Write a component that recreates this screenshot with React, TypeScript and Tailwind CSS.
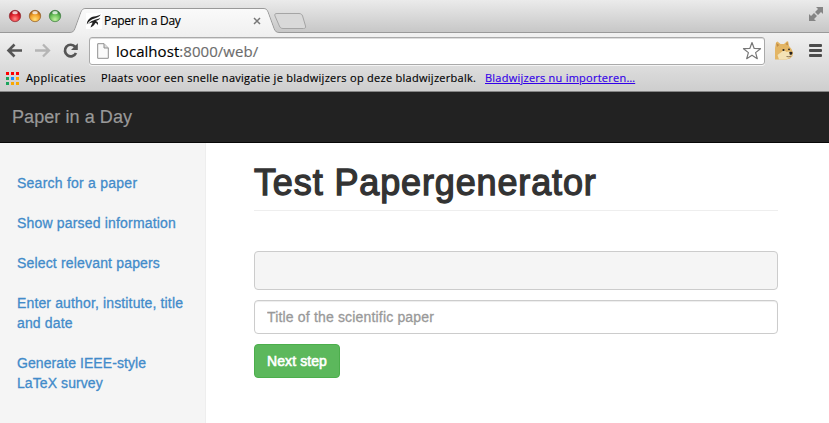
import React from "react";

const steps = [
  { lines: ["Search for a paper"], tracking: "tracking-[0.24px]" },
  { lines: ["Show parsed information"], tracking: "tracking-[0.18px]" },
  { lines: ["Select relevant papers"], tracking: "tracking-[0.17px]" },
  { lines: ["Enter author, institute, title", "and date"], tracking: "tracking-[0.14px]" },
  { lines: ["Generate IEEE-style", "LaTeX survey"], tracking: "tracking-[0.08px]" },
];

function TrafficLights() {
  return (
    <svg width="54" height="16" viewBox="0 0 54 16" className="absolute left-[8px] top-[8px]">
      <defs>
        <radialGradient id="red" cx=".5" cy=".75" r=".65">
          <stop offset="0" stopColor="#ff8a86" /><stop offset=".6" stopColor="#e3242e" /><stop offset="1" stopColor="#a3101c" />
        </radialGradient>
        <radialGradient id="amber" cx=".5" cy=".8" r=".7">
          <stop offset="0" stopColor="#ffe07a" /><stop offset=".6" stopColor="#f4a32a" /><stop offset="1" stopColor="#a8631a" />
        </radialGradient>
        <radialGradient id="green" cx=".5" cy=".8" r=".7">
          <stop offset="0" stopColor="#c0f0a0" /><stop offset=".6" stopColor="#6cc25a" /><stop offset="1" stopColor="#37813a" />
        </radialGradient>
      </defs>
      <circle cx="7" cy="8" r="5.7" fill="url(#red)" stroke="#8e2a30" strokeWidth=".7" />
      <circle cx="27" cy="8" r="5.7" fill="url(#amber)" stroke="#8f5a22" strokeWidth=".7" />
      <circle cx="47" cy="8" r="5.7" fill="url(#green)" stroke="#3c7a3e" strokeWidth=".7" />
      <ellipse cx="7" cy="4.7" rx="2.8" ry="1.6" fill="#fff" opacity=".75" />
      <ellipse cx="27" cy="4.7" rx="2.8" ry="1.6" fill="#fff" opacity=".75" />
      <ellipse cx="47" cy="4.7" rx="2.8" ry="1.6" fill="#fff" opacity=".75" />
    </svg>
  );
}

function TabStrip() {
  return (
    <div className="relative h-[33px] w-full bg-gradient-to-b from-[#ebebeb] to-[#c6c6c6]">
      <svg width="829" height="33" viewBox="0 0 829 33" className="absolute inset-0">
        <defs>
          <linearGradient id="tab" x1="0" x2="0" y1="0" y2="1">
            <stop offset="0" stopColor="#fafafa" /><stop offset="1" stopColor="#f1f1f1" />
          </linearGradient>
        </defs>
        <path d="M0 32.500H70C73 32.500 74 31 75 28.500L81 12C82.200 9.500 83 8.500 86 8.500H263C266 8.500 267 9.500 268 12L274 28.500C275 31 276 32.500 279 32.500H829" fill="none" stroke="#999" />
        <path d="M70 33C73 33 74.500 31 75.500 28.500L81.500 12C82.500 9.800 83.500 9 86 9H263C265.500 9 266.500 9.800 267.500 12L273.500 28.500C274.500 31 276 33 279 33Z" fill="url(#tab)" />
        <path d="M277 13.500H299C301 13.500 302 14.500 302.600 16L305.500 26C306 27.800 305 28.500 303.500 28.500H283C281 28.500 280 27.500 279.400 26L275 16C274.300 14.300 275 13.500 277 13.500Z" fill="#d9d9d9" stroke="#a5a5a5" />
        <g fill="#858585">
          <path d="M816 7h7v7l-2-2-3 3-3-3 3-3Z" />
          <path d="M809 14v7h7l-2-2 3-3-3-3-3 3Z" />
        </g>
        <path d="M813 11L819 17" stroke="#d8d8d8" strokeWidth="1" />
      </svg>
      <TrafficLights />
      <div className="relative flex h-[33px] w-[261px] items-center pl-[86px] pt-[8px]">
        <svg width="16" height="16" viewBox="0 0 16 16" className="mt-[1px] shrink-0">
          <path d="M0 0h16v16H0z" fill="#fff" />
          <path d="M.8 11.500C1 6.500 4.500 4 8 3.400C10.500 3 12.500 3 14.800 1.500C13.500 4 11 4.600 8.500 5.400C5.500 6.300 3 8 .8 11.500Z" fill="#222" />
          <path d="M2 11.300C4.500 7.500 9.500 6.800 14.300 5C13.300 7 11.500 7.500 9.800 8C11.500 8.300 12.400 9.500 12 12.300C11.200 10.800 10.300 10 9.200 10C8.800 12 7 13.200 4.600 14.600C4.900 12.600 6.300 11.200 6.500 9.600C5 9.400 3.500 10.200 2 11.300Z" fill="#222" />
        </svg>
        <span className="ml-[2px] whitespace-nowrap text-[12px] leading-[16px] tracking-[-0.3px] text-black [-webkit-text-stroke:0.15px_#000]">Paper in a Day</span>
        <svg width="8" height="8" viewBox="0 0 8 8" className="ml-auto mt-[1px]">
          <path d="M1 1l6 6M7 1L1 7" stroke="#777" strokeWidth="1.500" />
        </svg>
      </div>
    </div>
  );
}

function Doge() {
  return (
    <svg width="20" height="20" viewBox="0 0 20 20">
      <path d="M1 19.500V8L2 2.500L3.500 1.500L6.500 4H10L13 1.200L14.200 1.500L15 6L17.500 9L19 12.500L18.500 16L16 18.500L12 19.500Z" fill="#e3b564" />
      <path d="M2.300 3L5.300 5L3 7ZM13.300 2L14.200 5.500L11.800 4.200Z" fill="#c08c45" />
      <path d="M7.500 12L10 10L12.500 12L15 11.500L17.500 12L17.800 15.500L15.500 17.800L12 19.500H5L3.500 15Z" fill="#f4e2b5" />
      <path d="M15.200 12Q18.300 11 18.600 13L17.600 14.700H15.800Z" fill="#26211f" />
      <path d="M12.500 16.500Q15 17.400 17.300 16" stroke="#80664a" strokeWidth=".9" fill="none" />
      <circle cx="9.500" cy="10" r="1.100" fill="#292421" />
      <circle cx="15" cy="9.300" r=".9" fill="#292421" />
    </svg>
  );
}

function Toolbar() {
  return (
    <div className="flex h-[32px] items-start pt-[4px]">
      <svg width="89" height="28" viewBox="0 0 89 28" fill="none">
        <path d="M22 13.500H9M14.500 7.500L8.500 13.500L14.500 19.500" stroke="#555" strokeWidth="2.600" />
        <path d="M35 13.500H48M43 7.500L49 13.500L43 19.500" stroke="#b5b5b5" strokeWidth="2.300" />
        <path d="M75.200 9.800A5.800 5.800 0 1 0 76 16" stroke="#555" strokeWidth="2.700" />
        <path d="M77.800 6.300V13H71Z" fill="#555" />
      </svg>
      <div className="flex h-[28px] w-[676px] items-center rounded-[3px] border border-[#aaa] bg-white shadow-[inset_0_1px_0_#ddd,0_1px_0_#f5f5f5]">
        <svg width="12" height="16" viewBox="0 0 12 16" className="ml-[7px]">
          <path d="M.7.700H7L11.300 5V15.300H.7Z" fill="#fafafa" stroke="#8f8f8f" />
          <path d="M7 .7V5H11.300" fill="#ddd" stroke="#8f8f8f" />
        </svg>
        <span className="ml-[7px] mt-[-1px] whitespace-nowrap text-[15px] leading-[20px] tracking-[0.05px] text-[#6c6c6c] [-webkit-text-stroke:0.15px]">
          <span className="text-black">localhost</span>:8000/web/
        </span>
        <svg width="20" height="20" viewBox="0 0 20 20" className="ml-auto mr-[2px]">
          <path d="M10 1.500L12.200 7.500L18.500 7.700L13.600 11.600L15.300 17.700L10 14.200L4.700 17.700L6.400 11.600L1.500 7.700L7.800 7.500Z" fill="#fff" stroke="#777" strokeWidth="1.200" strokeLinejoin="round" />
        </svg>
      </div>
      <div className="ml-[9px] mt-[3px]"><Doge /></div>
      <div className="ml-[15px] mt-[7px] flex flex-col gap-[2px]">
        <i className="h-[3px] w-[13px] rounded-[1px] bg-[#4c4c4c]" />
        <i className="h-[3px] w-[13px] rounded-[1px] bg-[#4c4c4c]" />
        <i className="h-[3px] w-[13px] rounded-[1px] bg-[#4c4c4c]" />
      </div>
    </div>
  );
}

const dots = ["bg-[#f00]", "bg-[#f00]", "bg-[#f00]", "bg-[#1ba45c]", "bg-[#1a8cff]", "bg-[#f9a800]", "bg-[#1ba45c]", "bg-[#f9a800]", "bg-[#f9a800]"];

function Bookmarks() {
  return (
    <div className="flex h-[26px] items-center whitespace-nowrap pl-[6px] text-[11px] leading-[16px] text-black [-webkit-text-stroke:0.15px]">
      <div className="grid grid-cols-3 gap-[2px]">
        {dots.map((color, i) => <i key={i} className={`h-[3px] w-[3px] ${color}`} />)}
      </div>
      <span className="ml-[7px] w-[75px] tracking-[0.4px]">Applicaties</span>
      <span className="w-[384px] tracking-[0.28px]">Plaats voor een snelle navigatie je bladwijzers op deze bladwijzerbalk.</span>
      <a className="tracking-[0.24px] text-[#3300e8] underline">Bladwijzers nu importeren…</a>
    </div>
  );
}

export default function App() {
  return (
    <div className="flex h-[423px] w-[829px] flex-col overflow-hidden bg-white font-['Liberation_Sans',Arial,sans-serif]">
      <div className="font-['Open_Sans','Noto_Sans',sans-serif]">
        <TabStrip />
        <div className="h-[59px] border-b border-[#858585] bg-gradient-to-b from-[#f1f1f1] to-[#cecece]">
          <Toolbar />
          <Bookmarks />
        </div>
      </div>
      <nav className="flex h-[51px] shrink-0 items-center border-b border-[#080808] bg-[#222] pl-[12px] text-[18px] leading-[20px] tracking-[0.07px] text-[#999] [-webkit-text-stroke:0.2px_#999]">
        Paper in a Day
      </nav>
      <div className="flex min-h-0 flex-1">
        <aside className="flex w-[206px] shrink-0 flex-col gap-[20px] border-r border-[#eee] bg-[#f5f5f5] pl-[17px] pt-[30px] text-[14px] leading-[20px] text-[#428bca] [-webkit-text-stroke:0.3px_#428bca]">
          {steps.map((step) => (
            <a key={step.lines[0]} className={`whitespace-nowrap ${step.tracking}`}>
              {step.lines.map((line) => <span key={line} className="block">{line}</span>)}
            </a>
          ))}
        </aside>
        <main className="flex w-[572px] flex-col pl-[48px]">
          <h1 className="mt-[20px] h-[48px] whitespace-nowrap border-b border-[#eee] text-[36px] leading-[39px] tracking-[0.87px] text-[#333] [-webkit-text-stroke:1.3px_#333]">Test Papergenerator</h1>
          <div className="mt-[40px] h-[39px] shrink-0 rounded-[4px] border border-[#ccc] bg-[#f5f5f5]" />
          <input className="mt-[10px] h-[34px] shrink-0 rounded-[4px] border border-[#ccc] px-[12px] text-[14px] tracking-[0.17px] shadow-[inset_0_1px_1px_rgba(0,0,0,0.075)] outline-none placeholder:text-[#999] placeholder:[-webkit-text-stroke:0.3px_#999]" placeholder="Title of the scientific paper" />
          <button className="mt-[10px] h-[34px] w-[86px] shrink-0 whitespace-nowrap rounded-[4px] border border-[#4cae4c] bg-[#5cb85c] text-[14px] tracking-[0.1px] text-white [-webkit-text-stroke:0.6px_#fff]">Next step</button>
        </main>
      </div>
    </div>
  );
}
